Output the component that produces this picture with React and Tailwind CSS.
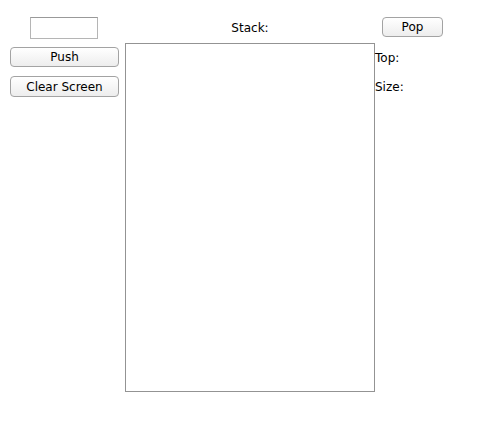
export default function App() {
  const font = { fontFamily: '"DejaVu Sans", "Liberation Sans", sans-serif' }
  const btn =
    'flex items-center justify-center rounded-[4px] border border-[#a3a3a3] bg-gradient-to-b from-white to-[#ededed] text-[12px] text-black leading-none'

  return (
    <div className="w-[499px] h-[437px] bg-white flex pt-[17px]" style={font}>
      <div className="ml-[10px] w-[109px] flex flex-col">
        <input
          type="text"
          className="ml-[20px] w-[68px] h-[22px] border border-[#b5b5b5] border-t-[#999] bg-white outline-none"
        />
        <button className={`${btn} w-full h-[20px] mt-[8px]`}>Push</button>
        <button className={`${btn} w-full h-[21px] mt-[9px]`}>Clear Screen</button>
      </div>

      <div className="ml-[6px] w-[250px] flex flex-col">
        <div className="h-[22px] flex items-center justify-center text-[12px] text-black">Stack:</div>
        <div className="mt-[4px] h-[349px] border border-[#939393] bg-white" />
      </div>

      <div className="flex flex-col">
        <button className={`${btn} ml-[7px] w-[61px] h-[20px]`}>Pop</button>
        <div className="mt-[14px] text-[12px] leading-[14px] text-black">Top:</div>
        <div className="mt-[15px] text-[12px] leading-[14px] text-black">Size:</div>
      </div>
    </div>
  )
}
